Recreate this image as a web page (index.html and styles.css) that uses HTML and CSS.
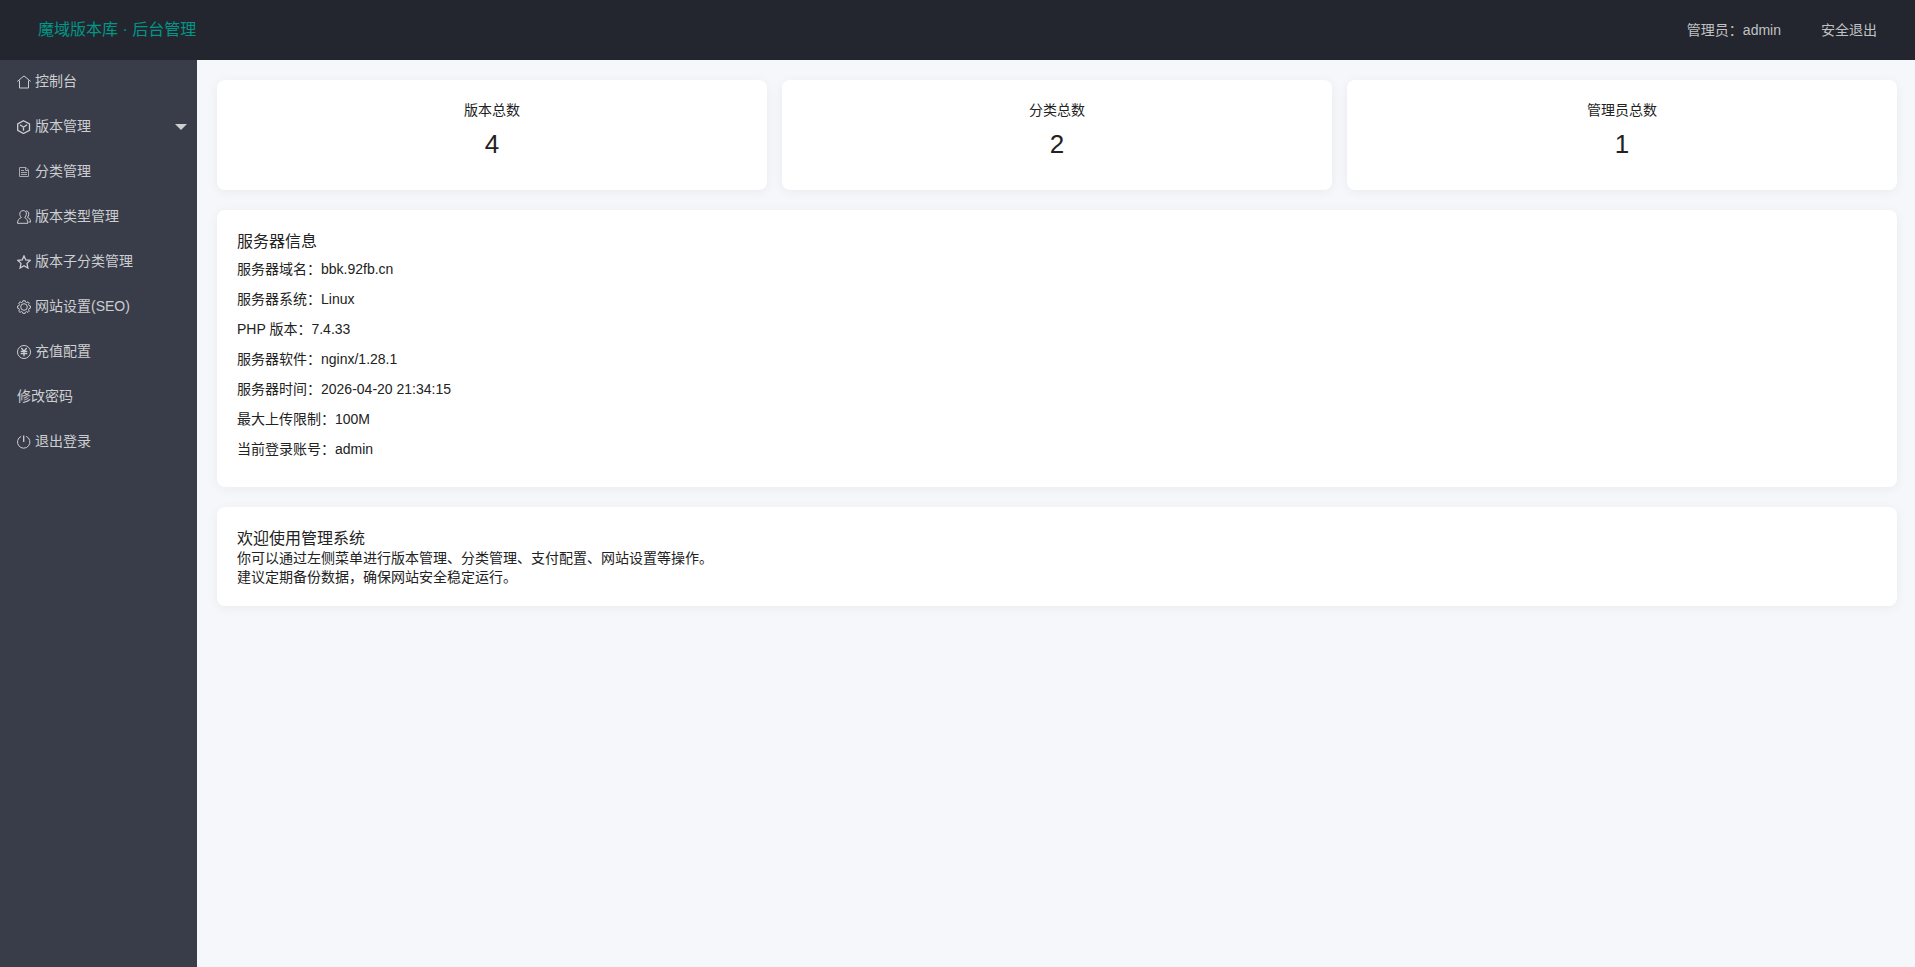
FILE: index.html
```html
<!DOCTYPE html>
<html lang="zh-CN">
<head>
<meta charset="utf-8">
<title>魔域版本库 · 后台管理</title>
<link rel="stylesheet" href="styles.css">
</head>
<body>
<header class="header">
  <a class="logo" href="#">魔域版本库 · 后台管理</a>
  <nav class="header-nav">
    <a href="#">管理员：admin</a>
    <a href="#">安全退出</a>
  </nav>
</header>
<div class="layout">
  <nav class="side">
    <a class="side-item" href="#"><svg class="icon" viewBox="0 0 14 14"><path d="M.3 6.500 7 .900l6.700 5.600M2.500 5.500v7.500h9V5.500"/></svg>控制台</a>
    <a class="side-item" href="#"><svg class="icon bold" viewBox="0 0 14 14"><path d="M6.500.700 12.500 3.900v6.400L6.500 13.500.700 10.300V3.900zM3 4.800l3.500 2.400L10 4.800M6.500 7.200v3.600"/></svg>版本管理<span class="caret"></span></a>
    <a class="side-item" href="#"><svg class="icon thin" viewBox="0 0 14 14"><path d="M2.500 2.500h6.500l2.500 2.500v6.500h-9zM8.500 2.500v3h3M4 5.500h3M4 7.500h6M4 9.500h6"/></svg>分类管理</a>
    <a class="side-item" href="#"><svg class="icon" viewBox="0 0 14 14"><path d="M6.200.600C3.800.600 2.700 2.200 2.800 4.200c.1 1.600.8 2.600 1.600 3.300C2 8.500.5 10 .5 13.300h10.300c0-3.300-1.300-4.800-3.100-5.800.9-.8 1.600-1.900 1.700-3.300C9.500 2.200 8.400.600 6.200.600zM9 .9c1.900 0 2.900 1.500 2.800 3.300-.1 1.400-.6 2.300-1.400 3.100 2 .9 3.100 2.300 3.200 4.700h-2"/></svg>版本类型管理</a>
    <a class="side-item" href="#"><svg class="icon bold" viewBox="0 0 14 14"><path d="m7 .900 1.800 4 4.400.5-3.200 3 .9 4.600L7 10.700 3.100 13l.9-4.600-3.200-3 4.400-.5z"/></svg>版本子分类管理</a>
    <a class="side-item" href="#"><svg class="icon" viewBox="0 0 14 14"><circle cx="7" cy="7" r="3.300"/><path d="M5.900.7h2.200l.4 1.400 1.200.5 1.300-.8 1.300 1.300-.8 1.300.5 1.200 1.400.4v2.200l-1.400.4-.5 1.200.8 1.300-1.300 1.300-1.300-.8-1.200.5-.4 1.300H5.900l-.4-1.300-1.200-.5-1.300.8-1.300-1.300.8-1.300L2 8.600.6 8.200V6l1.400-.4.5-1.200-.8-1.300L3 1.800l1.300.8 1.200-.5z"/></svg>网站设置(SEO)</a>
    <a class="side-item" href="#"><svg class="icon" viewBox="0 0 14 14"><circle cx="7" cy="7" r="6.500"/><path class="bold" d="m4.300 3 2.700 3.200L9.700 3M3.700 6.500h6.600M3.700 8.700h6.600M7 6.200v5.100"/></svg>充值配置</a>
    <a class="side-item" href="#">修改密码</a>
    <a class="side-item" href="#"><svg class="icon" viewBox="0 0 14 14"><path d="M4.200 1.300a6.200 6.200 0 1 0 5 0"/><path class="bold" d="M6.700.500v6.500"/></svg>退出登录</a>
  </nav>
  <main class="main">
    <div class="stats">
      <section class="card stat"><p class="stat-label">版本总数</p><p class="stat-value">4</p></section>
      <section class="card stat"><p class="stat-label">分类总数</p><p class="stat-value">2</p></section>
      <section class="card stat"><p class="stat-label">管理员总数</p><p class="stat-value">1</p></section>
    </div>
    <section class="card">
      <h2 class="title">服务器信息</h2>
      <ul class="info">
        <li>服务器域名：bbk.92fb.cn</li>
        <li>服务器系统：Linux</li>
        <li>PHP 版本：7.4.33</li>
        <li>服务器软件：nginx/1.28.1</li>
        <li>服务器时间：2026-04-20 21:34:15</li>
        <li>最大上传限制：100M</li>
        <li>当前登录账号：admin</li>
      </ul>
    </section>
    <section class="card">
      <h2 class="title">欢迎使用管理系统</h2>
      <p class="note">你可以通过左侧菜单进行版本管理、分类管理、支付配置、网站设置等操作。</p>
      <p class="note">建议定期备份数据，确保网站安全稳定运行。</p>
    </section>
  </main>
</div>
</body>
</html>
```
FILE: styles.css
```css
* { box-sizing: border-box; margin: 0; padding: 0; }
body {
  min-height: 100vh;
  display: flex;
  flex-direction: column;
  background: #f5f7fb;
  color: #222;
  font: 14px/19px "Liberation Sans", "Noto Sans CJK SC", sans-serif;
}
a { color: inherit; text-decoration: none; }
ul { list-style: none; }
.header {
  height: 60px;
  display: flex;
  align-items: center;
  justify-content: space-between;
  padding: 0 38px;
  background: #23262e;
  color: #c1c2c4;
}
.logo { padding-bottom: 2px; color: #009688; font-size: 16px; }
.header-nav { display: flex; gap: 40px; }
.layout { flex: 1; display: flex; }
.side { width: 197px; background: #393d49; color: #cdced1; }
.side-item {
  height: 45px;
  display: flex;
  align-items: center;
  padding: 0 10px 2px 17px;
}
.icon {
  width: 14px;
  height: 14px;
  margin-right: 4px;
  fill: none;
  stroke: currentColor;
  stroke-width: 1;
}
.bold { stroke-width: 1.3; }
.thin { opacity: .75; }
.caret {
  margin-left: auto;
  border: 6px solid transparent;
  border-top-color: currentColor;
  border-bottom: 0;
}
.main {
  flex: 1;
  display: flex;
  flex-direction: column;
  gap: 20px;
  padding: 20px 18px 20px 20px;
}
.stats { display: grid; grid-template-columns: repeat(3, 1fr); gap: 15px; }
.card {
  padding: 21px 20px 19px;
  border-radius: 8px;
  background: #fff;
  box-shadow: 0 2px 12px rgba(0, 0, 0, .05);
}
.stat { min-height: 110px; text-align: center; }
.stat-value { margin-top: 8px; font-size: 26px; line-height: 32px; }
.title { font-size: 16px; font-weight: 400; line-height: 21px; }
.info { padding: 2px 0 4px; }
.info li { line-height: 30px; }
```
